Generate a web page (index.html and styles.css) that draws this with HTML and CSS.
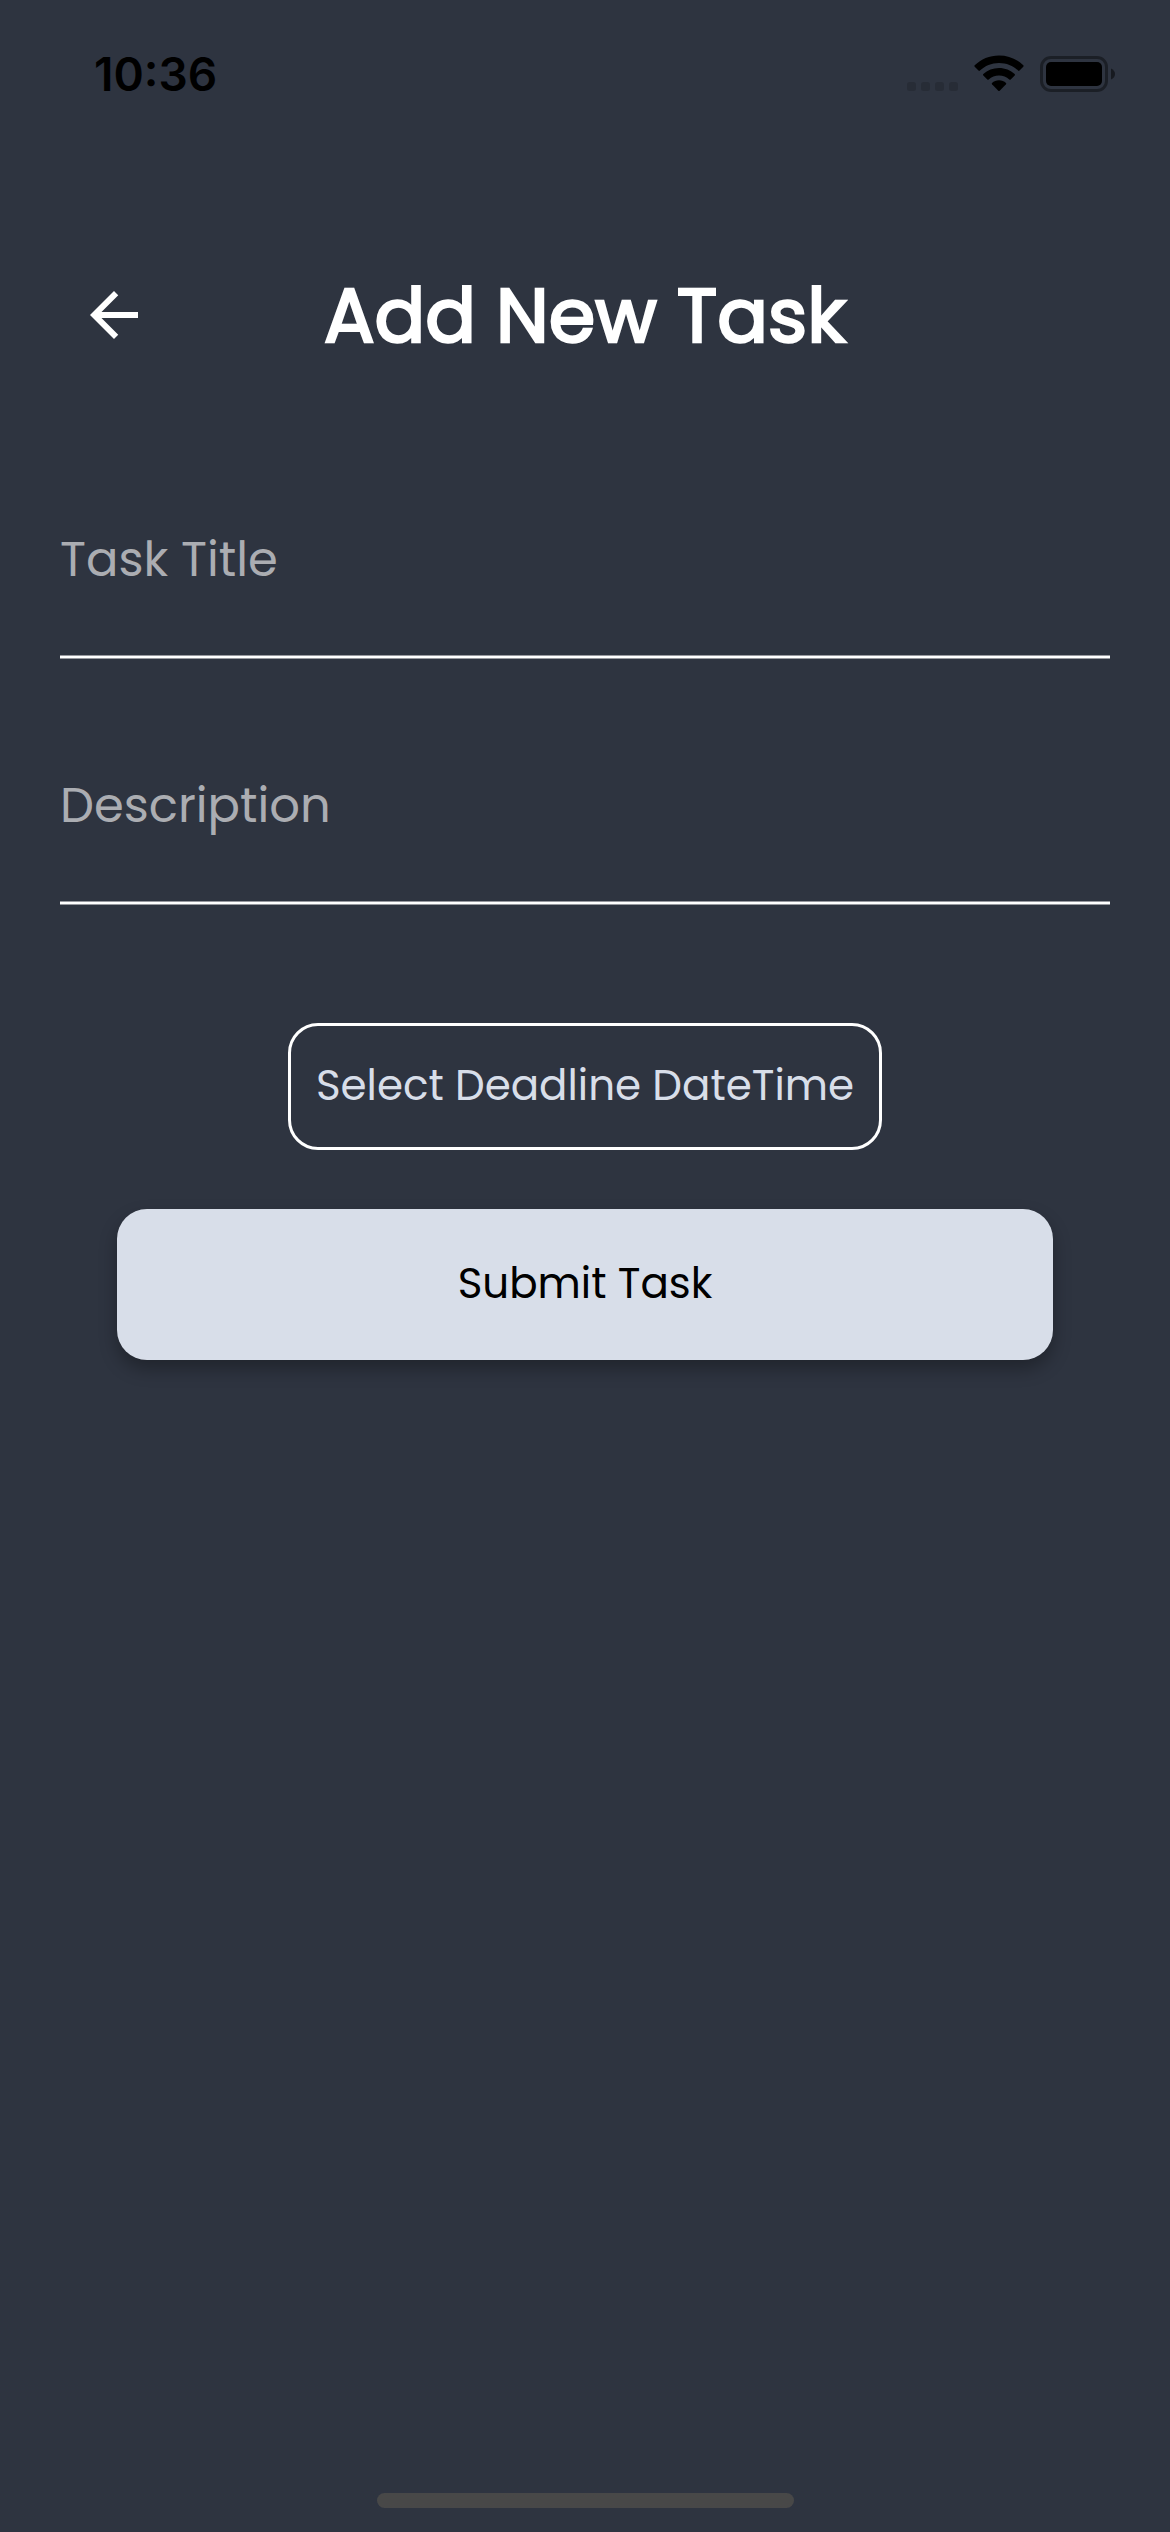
FILE: index.html
```
<!DOCTYPE html>
<html lang="en">
<head>
<meta charset="utf-8">
<title>Add New Task</title>
<link rel="stylesheet" href="styles.css">
</head>
<body>
<main class="screen">
  <div class="status">
    <span class="time">10:36</span>
    <div class="indicators">
      <svg class="dots" width="51" height="9" viewBox="0 0 51 9"><rect width="9" height="9" rx="2.5"/><rect x="14" width="9" height="9" rx="2.5"/><rect x="28" width="9" height="9" rx="2.5"/><rect x="42" width="9" height="9" rx="2.5"/></svg>
      <svg class="wifi" width="50" height="37" viewBox="0 0 50 37"><path d="M25 .5C34.500 .5 43 4.200 49.300 10.300Q49.900 11 49.300 11.700L45.500 15.600Q44.800 16.200 44.100 15.600C39 10.800 32.500 8 25 8S11 10.800 5.900 15.600Q5.200 16.200 4.500 15.600L.7 11.700Q.1 11 .7 10.300C7 4.200 15.500 .5 25 .5Z"/><path d="M25 13C31 13 36.500 15.300 40.700 19.100Q41.300 19.800 40.700 20.500L36.700 24.400Q36 25 35.300 24.400C32.500 21.900 29 20.500 25 20.500S17.500 21.900 14.700 24.400Q14 25 13.300 24.400L9.300 20.500Q8.700 19.800 9.300 19.100C13.500 15.300 19 13 25 13Z"/><path d="M25 25.300C27.700 25.300 30.100 26.200 32 27.900Q32.600 28.600 32 29.300L25.700 35.700Q25 36.300 24.300 35.700L18 29.300Q17.400 28.600 18 27.900C19.900 26.200 22.300 25.300 25 25.300Z"/></svg>
      <svg class="battery" width="76" height="36" viewBox="0 0 76 36"><rect x="1.500" y="1.500" width="65" height="33" rx="9.500" fill="none" stroke="#000" stroke-opacity=".4" stroke-width="3"/><rect x="6" y="6" width="56" height="24" rx="5"/><path d="M71 12.500Q75 14.500 75 18T71 23.500Z" fill-opacity=".5"/></svg>
    </div>
  </div>
  <header class="header">
    <svg class="back" width="72" height="72" viewBox="0 0 24 24"><path d="M20 11H7.830l5.590-5.590L12 4l-8 8 8 8 1.410-1.410L7.830 13H20v-2z"/></svg>
    <h1 class="title">Add New Task</h1>
  </header>
  <form class="form">
    <div class="field"><span class="hint">Task Title</span></div>
    <div class="field"><span class="hint">Description</span></div>
    <button class="deadline" type="button">Select Deadline DateTime</button>
    <button class="submit" type="button">Submit Task</button>
  </form>
  <div class="home"></div>
</main>
</body>
</html>
```
FILE: styles.css
```
* { box-sizing: border-box; }
body { margin: 0; background: #2e3440; }
.screen {
  width: 1170px; height: 2532px; overflow: hidden;
  display: flex; flex-direction: column;
  background: #2e3440; color: #fff;
  font-family: Poppins, Inter, sans-serif;
}
.status { height: 147px; padding: 0 54px 0 94px; display: flex; justify-content: space-between; }
.time { margin-top: 46px; font: 600 46px/56px Inter, sans-serif; color: #000; }
.indicators { display: flex; padding-top: 55px; height: 92px; align-items: flex-start; }
.dots { margin-top: 27px; fill-opacity: .15; }
.wifi { margin-left: 16px; }
.battery { margin: 1px 0 0 16px; }
.header { height: 336px; padding: 132px 78px 0; display: flex; align-items: flex-start; }
.back { fill: #fff; }
.title { margin: -8px 0 0 174px; font-size: 75px; line-height: 90px; font-weight: 400; -webkit-text-stroke: 2.6px #fff; white-space: nowrap; }
.form { display: flex; flex-direction: column; align-items: center; }
.field {
  width: 1050px; height: 176px; margin-bottom: 70px; padding-top: 47px;
  background: linear-gradient(#97999f 0 1px, #fff 1px 3px, #97999f 3px) bottom / 100% 4px no-repeat;
}
.hint { display: block; font-size: 48px; line-height: 60px; color: #abadb2; white-space: nowrap; }
.deadline, .submit {
  display: flex; align-items: center; justify-content: center; padding: 0 0 2px;
  font-family: inherit; font-size: 42px; line-height: 50px; white-space: nowrap;
  border-radius: 30px;
}
.deadline { width: 594px; height: 127px; margin-top: 48px; border: 3px solid #fff; background: none; color: #d8dee9; }
.submit { width: 936px; height: 151px; margin-top: 59px; border: 0; background: #d8dee9; color: #000; box-shadow: 0 9px 18px rgba(0, 0, 0, .3); }
.home { width: 417px; height: 15px; border-radius: 8px; background: #484848; margin: auto 0 24px 377px; }
```
